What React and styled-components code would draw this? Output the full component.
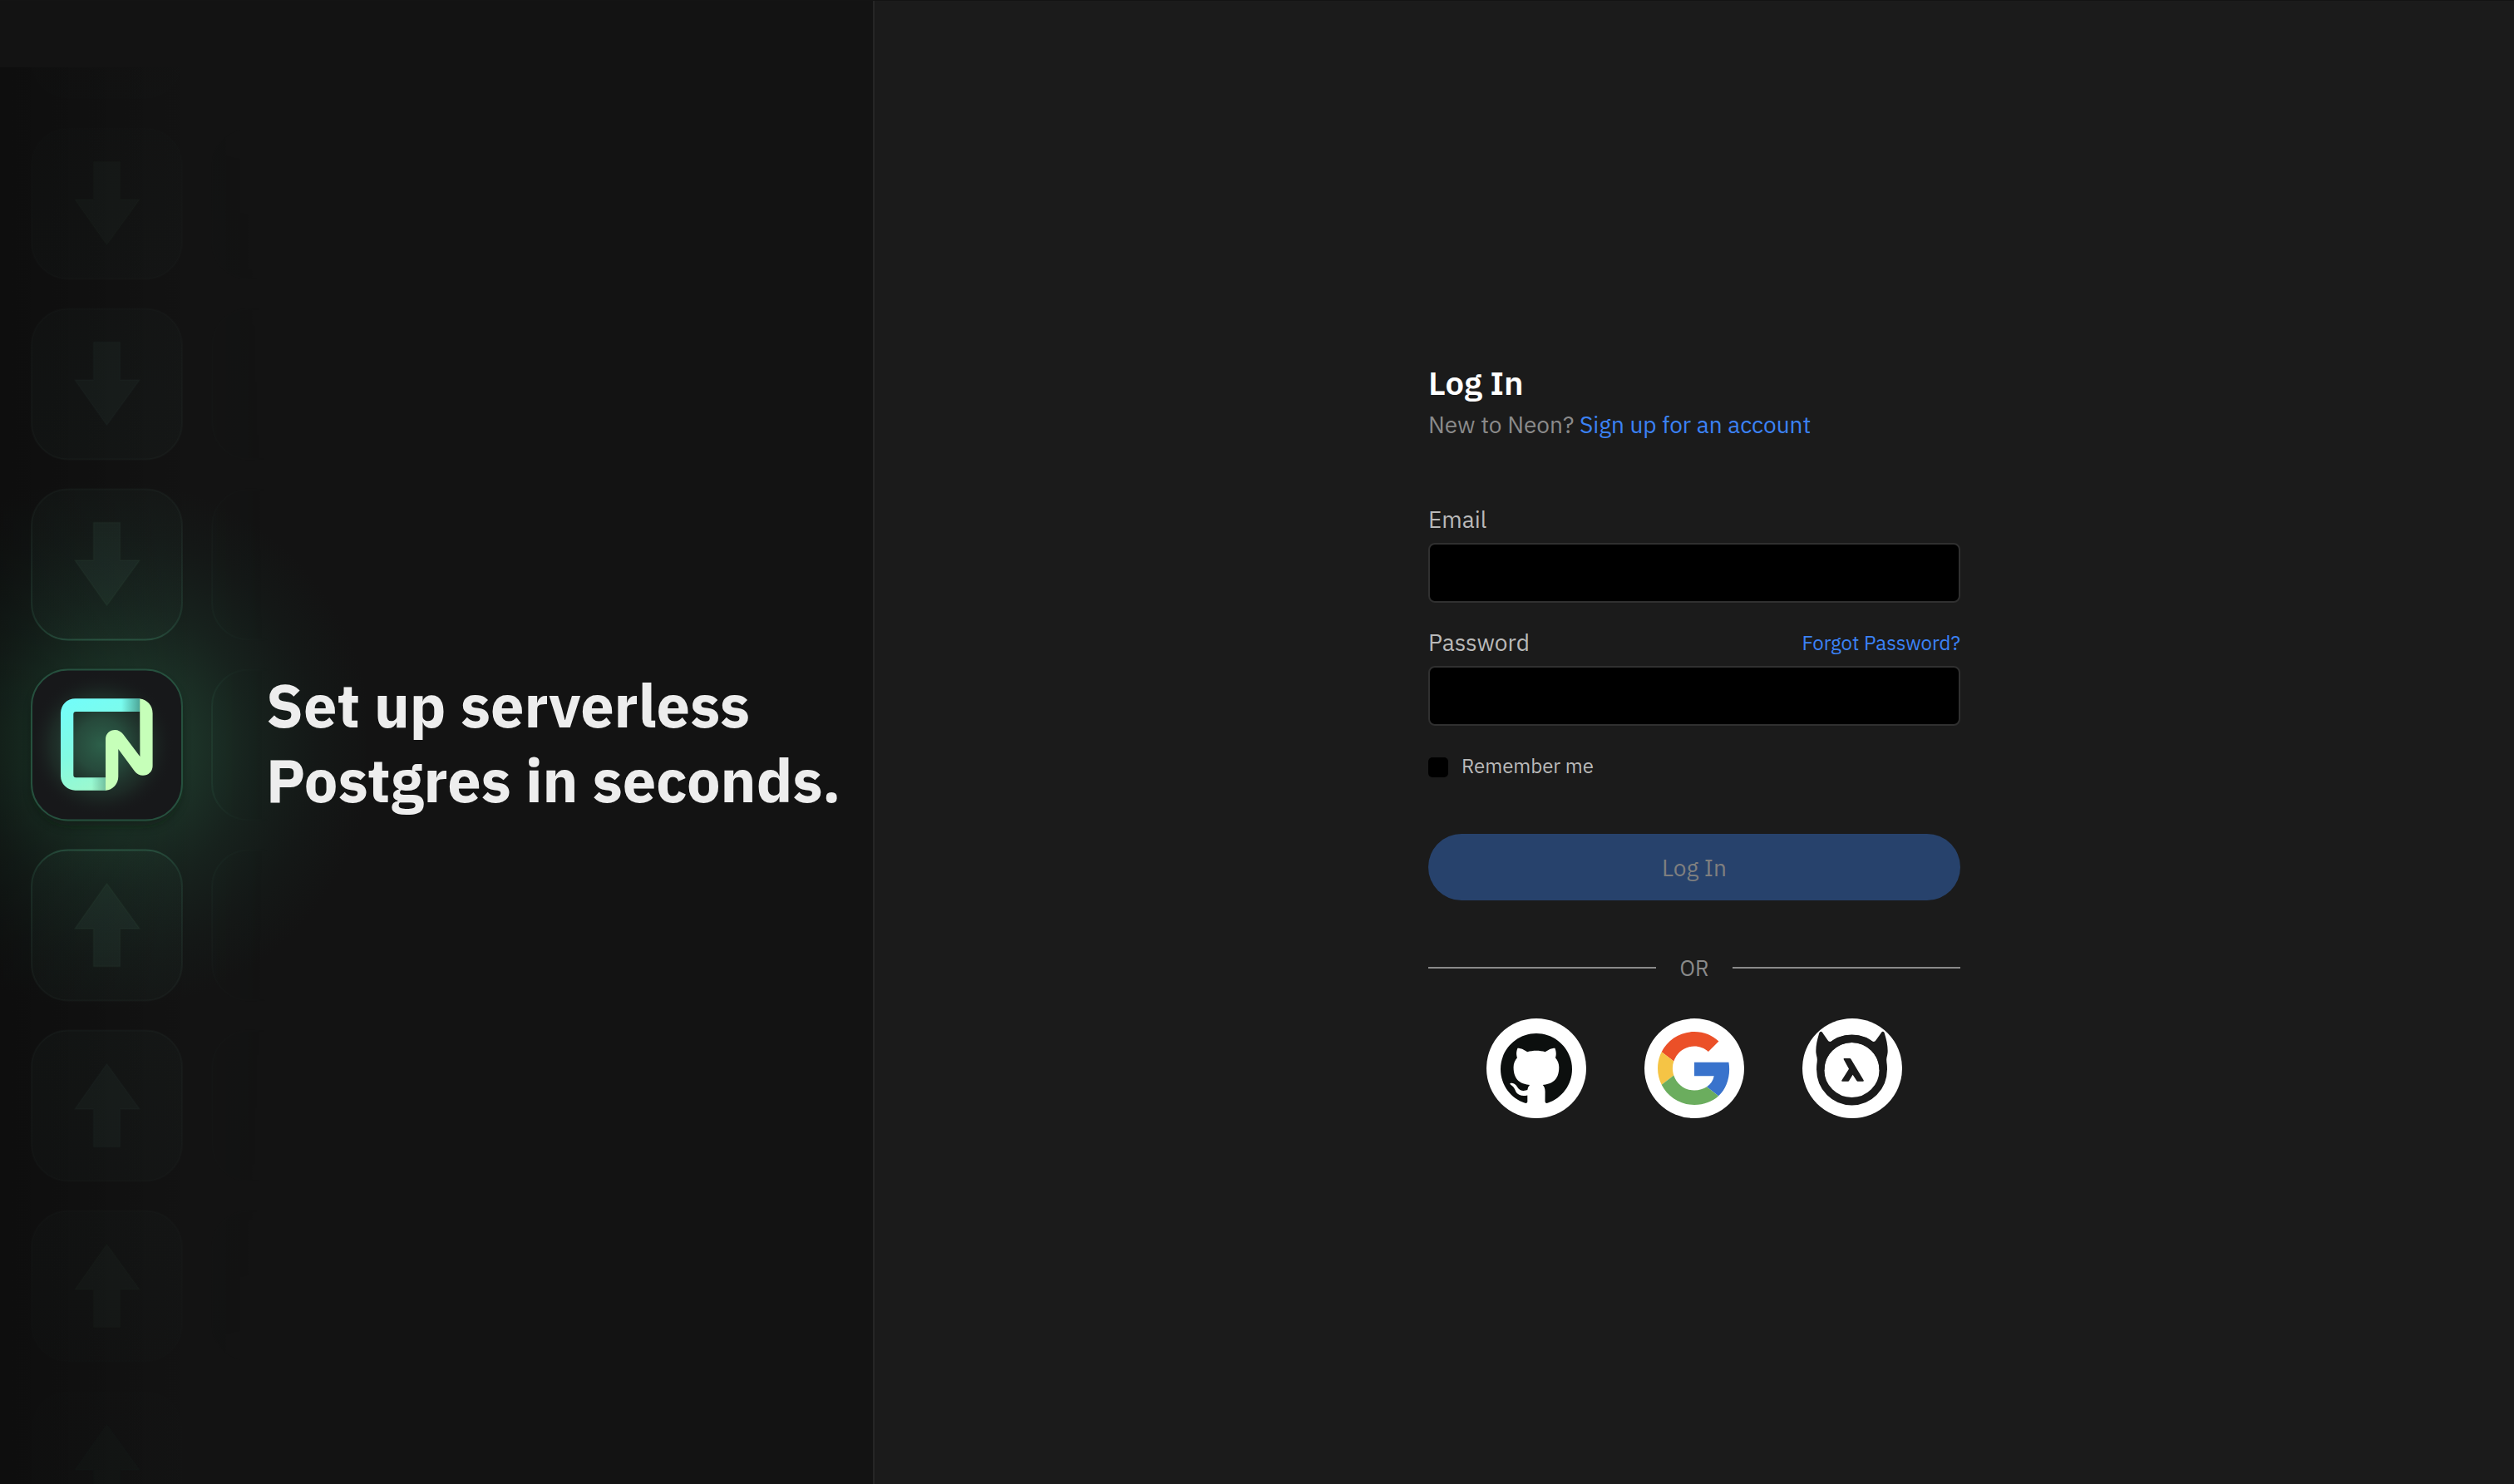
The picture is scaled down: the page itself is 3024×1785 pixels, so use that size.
import React, { useId } from "react";
import styled, { createGlobalStyle } from "styled-components";
import { SiGithub } from "react-icons/si";

const GlobalStyle = createGlobalStyle`
  *, *::before, *::after { box-sizing: border-box; }
  body {
    margin: 0;
    background: #1b1b1b;
    color: #b9b9b9;
    font-family: "IBM Plex Sans", Roboto, "Liberation Sans", sans-serif;
    font-size: 28px;
  }
`;

const Page = styled.div`
  display: grid;
  grid-template-columns: minmax(720px, 1052px) 1fr;
  min-height: 100vh;
  border-top: 1px solid #141414;
`;

const Aside = styled.aside`
  position: relative;
  display: flex;
  align-items: center;
  overflow: hidden;
  padding-left: 320px;
  background: #131313;
  border-right: 2px solid #262626;
`;

const Backdrop = styled.svg`
  position: absolute;
  top: 80px;
  left: 0;
  width: 440px;
  height: 1704px;
`;

const Slogan = styled.h2`
  position: relative;
  margin: 0;
  color: #ededed;
  font-size: 72px;
  font-weight: 700;
  line-height: 90px;
`;

const Main = styled.main`
  display: flex;
  flex-direction: column;
  align-items: center;
  justify-content: center;
  padding-bottom: 8px;
`;

const Panel = styled.div`
  display: flex;
  flex-direction: column;
  width: 100%;
  max-width: 640px;
`;

const Title = styled.h1`
  margin: 0;
  color: #fff;
  font-size: 40px;
  font-weight: 600;
  line-height: 54px;
`;

const Subtitle = styled.p`
  margin: 0;
  color: #8a8a8a;
  font-size: 28px;
  line-height: 48px;
`;

const Link = styled.a`
  color: #3b82f6;
  font-size: ${(p) => (p.$small ? 24 : 28)}px;
  text-decoration: none;
`;

const Form = styled.form`
  display: flex;
  flex-direction: column;
  margin-top: 70px;
`;

const Fields = styled.div`
  display: flex;
  flex-direction: column;
  gap: 28px;
`;

const Field = styled.div`
  display: flex;
  flex-direction: column;
  gap: 8px;
`;

const FieldHead = styled.div`
  display: flex;
  align-items: center;
  justify-content: space-between;
  line-height: 40px;
`;

const TextInput = styled.input`
  width: 100%;
  height: 72px;
  padding: 0 20px;
  border: 2px solid #303030;
  border-radius: 8px;
  outline: none;
  background: #000;
  color: #fff;
  font: inherit;
`;

const Remember = styled.label`
  display: flex;
  gap: 16px;
  margin-top: 32px;
  font-size: 24px;
  line-height: 32px;
`;

const Checkbox = styled.input`
  appearance: none;
  width: 24px;
  height: 24px;
  margin: 6px 0 0;
  border-radius: 5px;
  background: #000;
  &:checked { background: #3b82f6; }
`;

const Submit = styled.button`
  height: 80px;
  margin-top: 66px;
  border: 0;
  border-radius: 40px;
  background: #27426c;
  color: #7f7f7f;
  font: inherit;
`;

const Divider = styled.div`
  display: flex;
  align-items: center;
  margin-top: 63px;
  color: #8a8a8a;
  font-size: 26px;
  line-height: 36px;
  &::before, &::after {
    content: "";
    flex: 1;
    height: 2px;
    background: #8a8a8a;
  }
`;

const DividerText = styled.span`
  width: 92px;
  text-align: center;
`;

const Providers = styled.div`
  display: flex;
  justify-content: center;
  gap: 70px;
  margin-top: 43px;
`;

const Provider = styled.button`
  display: grid;
  place-items: center;
  width: 120px;
  height: 120px;
  padding: 0;
  border: 0;
  border-radius: 50%;
  background: #fff;
  color: #0c0f0e;
`;

const ProviderIcon = styled.svg`
  width: ${(p) => p.$size}px;
  height: ${(p) => p.$size}px;
`;

const TILE = 181;
const PITCH = 217;
const ROWS = [-4, -3, -2, -1, 1, 2, 3, 4];
const ARROW_OPACITY = [0, 0.07, 0.045, 0.032, 0.02];
const rowTop = (row) => 805.5 + row * PITCH;

function Arrow({ row }) {
  const place = row > 0
    ? `translate(38 ${rowTop(row)})`
    : `translate(38 ${rowTop(row) + TILE - 1}) scale(1 -1)`;
  return (
    <path
      transform={place}
      d="M90.5 40 L130 94.5 H106.5 V140 H74.5 V94.5 H52 Z"
      fill="#78b99b"
      fillOpacity={ARROW_OPACITY[Math.abs(row)]}
      stroke="#78b99b"
      strokeOpacity={ARROW_OPACITY[Math.abs(row)] / 2}
      strokeWidth="2"
      strokeLinejoin="round"
    />
  );
}

function Artwork() {
  const id = useId();
  const ref = (name) => `url(#${id}${name})`;
  return (
    <Backdrop viewBox="0 81 440 1704" aria-hidden="true">
      <defs>
        <linearGradient id={`${id}edge`} x1="0" x2="240" gradientUnits="userSpaceOnUse">
          <stop offset="0" stopColor="#000" stopOpacity=".28" />
          <stop offset="1" stopColor="#000" stopOpacity="0" />
        </linearGradient>
        <radialGradient id={`${id}glow`} cx="128" cy="896" r="320" gradientUnits="userSpaceOnUse">
          <stop offset="0" stopColor="#2c6a4b" stopOpacity=".5" />
          <stop offset=".32" stopColor="#2a6246" stopOpacity=".4" />
          <stop offset=".55" stopColor="#255741" stopOpacity=".22" />
          <stop offset=".8" stopColor="#204c3c" stopOpacity=".08" />
          <stop offset="1" stopColor="#204c3c" stopOpacity="0" />
        </radialGradient>
        <radialGradient id={`${id}line`} cx="128" cy="896" r="800" gradientUnits="userSpaceOnUse">
          <stop offset=".14" stopColor="#3f8a69" stopOpacity=".5" />
          <stop offset=".22" stopColor="#3a7d62" stopOpacity=".2" />
          <stop offset=".38" stopColor="#5f8a7c" stopOpacity=".06" />
          <stop offset=".65" stopColor="#6b8f84" stopOpacity=".025" />
          <stop offset="1" stopColor="#6b8f84" stopOpacity="0" />
        </radialGradient>
        <radialGradient id={`${id}fill`} cx="128" cy="896" r="800" gradientUnits="userSpaceOnUse">
          <stop offset=".14" stopColor="#4c9574" stopOpacity=".05" />
          <stop offset=".6" stopColor="#5a9c8c" stopOpacity=".025" />
          <stop offset="1" stopColor="#5a9c8c" stopOpacity=".005" />
        </radialGradient>
        <radialGradient id={`${id}core`} cx="122" cy="896" r="88" gradientUnits="userSpaceOnUse">
          <stop offset="0" stopColor="#2d604a" />
          <stop offset=".35" stopColor="#284f3f" stopOpacity=".9" />
          <stop offset=".7" stopColor="#22392f" stopOpacity=".5" />
          <stop offset="1" stopColor="#17181a" stopOpacity="0" />
        </radialGradient>
        <linearGradient id={`${id}fade`} x1="250" x2="325" gradientUnits="userSpaceOnUse">
          <stop offset="0" stopColor="#fff" stopOpacity=".35" />
          <stop offset="1" stopColor="#fff" stopOpacity="0" />
        </linearGradient>
        <linearGradient id={`${id}ring`} x1="78" y1="845" x2="125" y2="960" gradientUnits="userSpaceOnUse">
          <stop offset="0" stopColor="#73fdf9" />
          <stop offset=".5" stopColor="#82fae2" />
          <stop offset="1" stopColor="#a5f8c8" />
        </linearGradient>
        <linearGradient id={`${id}shadeTop`} x1="146" x2="169" gradientUnits="userSpaceOnUse">
          <stop offset="0" stopColor="#1b4b3e" stopOpacity="0" />
          <stop offset="1" stopColor="#1b4b3e" stopOpacity=".5" />
        </linearGradient>
        <linearGradient id={`${id}shadeBottom`} x1="110" x2="127" gradientUnits="userSpaceOnUse">
          <stop offset="0" stopColor="#1b4b3e" stopOpacity="0" />
          <stop offset="1" stopColor="#1b4b3e" stopOpacity=".32" />
        </linearGradient>
        <filter id={`${id}soft`} x="-20%" y="-20%" width="140%" height="150%">
          <feGaussianBlur stdDeviation="6" />
        </filter>
        <mask id={`${id}column`} maskUnits="userSpaceOnUse" x="250" y="81" width="190" height="1704">
          <rect x="250" y="81" width="190" height="1704" fill={ref("fade")} />
        </mask>
      </defs>

      <rect x="0" y="81" width="440" height="1704" fill={ref("glow")} />
      <rect x="0" y="81" width="240" height="1704" fill={ref("edge")} />

      <g mask={ref("column")}>
        {[...ROWS, 0].map((row) => (
          <rect key={row} x="255" y={rowTop(row)} width={TILE} height={TILE} rx="44"
            fill={ref("fill")} stroke={ref("line")} strokeWidth="2" />
        ))}
      </g>

      {ROWS.map((row) => (
        <g key={row}>
          <rect x="38" y={rowTop(row)} width={TILE} height={TILE} rx="44"
            fill={ref("fill")} stroke={ref("line")} strokeWidth="2" />
          <Arrow row={row} />
        </g>
      ))}

      <rect x="40" y="814" width="177" height="179" rx="44" fill="#08120d" opacity=".5" filter={ref("soft")} />
      <rect x="38" y="805.5" width={TILE} height={TILE} rx="44" fill="#17181a" />
      <rect x="38" y="805.5" width={TILE} height={TILE} rx="44" fill={ref("core")} />
      <rect x="38" y="805.5" width={TILE} height={TILE} rx="44" fill="none" stroke="#26503e" strokeWidth="2" />

      <path fill={ref("ring")} d="M168.5 840.2 H90.5 A17.5 17.5 0 0 0 73 857.7 V933.2 A17.5 17.5 0 0 0 90.5 950.7 H127.5 V935.3 H91.3 A3 3 0 0 1 88.3 932.3 V859 A3 3 0 0 1 91.3 856 H168.5 Z" />
      <path fill={ref("shadeTop")} d="M146 840.2 H168.5 V856 H146 Z" />
      <path fill={ref("shadeBottom")} d="M110 935.3 H127.5 V950.7 H110 Z" />
      <path fill="#c6ffb9" d="M168.2 840.6 C177 841.4 183.6 848.6 183.6 858 V921.5 C183.6 928 178.4 932.8 172 932.8 C168 932.8 164.6 931 162.2 928 L142.3 901 V934 C142.3 943 135.8 950.2 127 950.7 V889 C127 882.6 132 878 138.3 878 C142.2 878 145.7 880 148 883 L168.4 910 Z" />
    </Backdrop>
  );
}

function GoogleMark() {
  return (
    <ProviderIcon $size={88} viewBox="0 0 48 48" aria-hidden="true">
      <path fill="#eb5028" d="M24 9.5c3.54 0 6.71 1.22 9.21 3.6l6.85-6.85C35.9 2.38 30.47 0 24 0 14.62 0 6.51 5.38 2.56 13.22l7.98 6.19C12.43 13.72 17.74 9.5 24 9.5z" />
      <path fill="#3973cc" d="M46.98 24.55c0-1.57-.15-3.09-.38-4.55H24v9.02h12.94c-.58 2.96-2.26 5.48-4.78 7.18l7.73 6c4.51-4.18 7.09-10.36 7.09-17.65z" />
      <path fill="#f5c445" d="M10.53 28.59c-.48-1.45-.76-2.99-.76-4.59s.27-3.14.76-4.59l-7.98-6.19C.92 16.46 0 20.12 0 24c0 3.88.92 7.54 2.56 10.78l7.97-6.19z" />
      <path fill="#6bad5e" d="M24 48c6.48 0 11.93-2.13 15.89-5.81l-7.73-6c-2.15 1.45-4.92 2.3-8.16 2.3-6.26 0-11.57-4.22-13.47-9.91l-7.98 6.19C6.51 42.62 14.62 48 24 48z" />
    </ProviderIcon>
  );
}

function HasuraMark() {
  return (
    <ProviderIcon $size={120} viewBox="0 0 120 120" aria-hidden="true">
      <circle cx="59.5" cy="62" r="37.7" fill="none" stroke="#1b1b1b" strokeWidth="9.4" />
      <path fill="#1b1b1b" d="M22.4 15.8 C23.4 15.8 24.2 16.8 24.8 18 L30.4 26 C31.6 28 33.4 28.4 35.4 27.2 C42 22.8 50.5 20 59.5 20 C68.5 20 77 22.8 83.6 27.2 C85.6 28.4 87.4 28 88.6 26 L94.4 18 C95 16.8 95.8 15.8 96.8 15.8 C98 15.8 98.6 17 99 18.4 C101.4 26 103 34 102.6 41 C102.4 44 101 47.6 101.2 50 L102 62 H92.6 A33.1 33.1 0 0 0 26.4 62 H17 L17.8 50 C18 47.6 16.6 44 16.4 41 C16 34 17.6 26 20 18.4 C20.6 17 21.2 15.8 22.4 15.8 Z" />
      <path fill="#1b1b1b" d="M50.3 48 H57 Q58 48 58.5 49 L73.8 74.6 Q74 75.6 73.2 75.7 H66.6 Q65.8 75.7 65.2 74.8 L60.6 67.7 L56.3 74.8 Q55.8 75.7 55 75.7 H47.8 Q46.8 75.6 47.3 74.6 L56 60.7 L49.7 49.2 Q49.3 48 50.3 48 Z" />
    </ProviderIcon>
  );
}

export default function App() {
  return (
    <>
      <GlobalStyle />
      <Page>
        <Aside>
          <Artwork />
          <Slogan>
            Set up serverless
            <br />
            Postgres in seconds.
          </Slogan>
        </Aside>
        <Main>
          <Panel>
            <Title>Log In</Title>
            <Subtitle>
              New to Neon? <Link href="#signup">Sign up for an account</Link>
            </Subtitle>
            <Form onSubmit={(event) => event.preventDefault()}>
              <Fields>
                <Field>
                  <FieldHead>
                    <label htmlFor="email">Email</label>
                  </FieldHead>
                  <TextInput id="email" type="email" autoComplete="email" />
                </Field>
                <Field>
                  <FieldHead>
                    <label htmlFor="password">Password</label>
                    <Link $small href="#forgot">Forgot Password?</Link>
                  </FieldHead>
                  <TextInput id="password" type="password" autoComplete="current-password" />
                </Field>
              </Fields>
              <Remember>
                <Checkbox type="checkbox" name="remember" />
                Remember me
              </Remember>
              <Submit type="submit" disabled>Log In</Submit>
            </Form>
            <Divider>
              <DividerText>OR</DividerText>
            </Divider>
            <Providers>
              <Provider type="button" aria-label="Log in with GitHub">
                <SiGithub size={86} />
              </Provider>
              <Provider type="button" aria-label="Log in with Google">
                <GoogleMark />
              </Provider>
              <Provider type="button" aria-label="Log in with Hasura">
                <HasuraMark />
              </Provider>
            </Providers>
          </Panel>
        </Main>
      </Page>
    </>
  );
}
